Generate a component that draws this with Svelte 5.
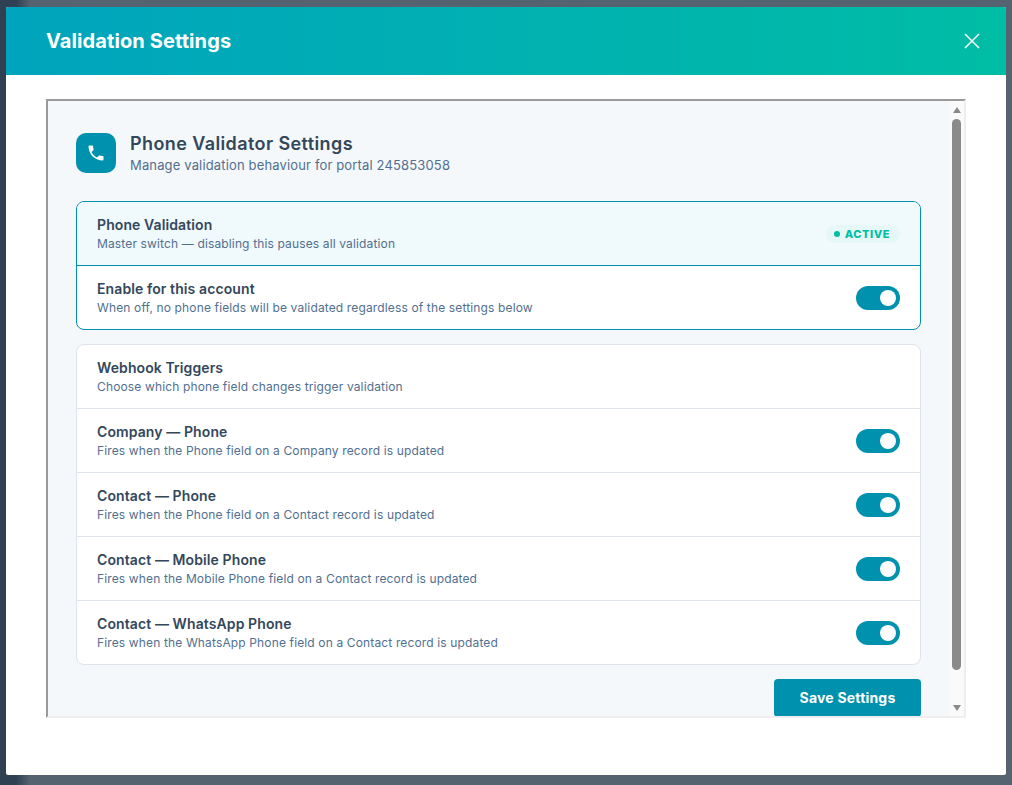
<script>
  const triggers = [
    { title: 'Company — Phone', desc: 'Fires when the Phone field on a Company record is updated' },
    { title: 'Contact — Phone', desc: 'Fires when the Phone field on a Contact record is updated' },
    { title: 'Contact — Mobile Phone', desc: 'Fires when the Mobile Phone field on a Contact record is updated' },
    { title: 'Contact — WhatsApp Phone', desc: 'Fires when the WhatsApp Phone field on a Contact record is updated' }
  ];
</script>

<div class="backdrop">
  <div class="modal">
    <header class="modal-head">
      <h1>Validation Settings</h1>
      <button class="close" aria-label="Close">
        <svg width="16" height="16" viewBox="0 0 16 16" fill="none" stroke="currentColor" stroke-width="1.5">
          <path d="M1 1l14 14M15 1L1 15" />
        </svg>
      </button>
    </header>
    <div class="modal-body">
      <div class="frame">
        <div class="page">
          <div class="title-row">
            <div class="logo">
              <svg width="20" height="20" viewBox="0 0 24 24" fill="#fff">
                <path d="M6.600 10.800c1.400 2.800 3.800 5.100 6.600 6.600l2.200-2.200c.3-.3.7-.4 1-.2 1.100.4 2.300.6 3.600.6.600 0 1 .4 1 1V20c0 .6-.4 1-1 1C10.600 21 3 13.400 3 4c0-.6.4-1 1-1h3.500c.6 0 1 .4 1 1 0 1.300.2 2.500.6 3.600.1.300 0 .7-.2 1z" />
              </svg>
            </div>
            <div>
              <h2>Phone Validator Settings</h2>
              <p class="sub">Manage validation behaviour for portal 245853058</p>
            </div>
          </div>

          <section class="card master">
            <div class="row head">
              <div>
                <div class="name">Phone Validation</div>
                <div class="desc">Master switch — disabling this pauses all validation</div>
              </div>
              <span class="badge"><i></i>ACTIVE</span>
            </div>
            <div class="row">
              <div>
                <div class="name">Enable for this account</div>
                <div class="desc">When off, no phone fields will be validated regardless of the settings below</div>
              </div>
              <span class="toggle"></span>
            </div>
          </section>

          <section class="card">
            <div class="row">
              <div>
                <div class="name">Webhook Triggers</div>
                <div class="desc">Choose which phone field changes trigger validation</div>
              </div>
            </div>
            {#each triggers as t}
              <div class="row">
                <div>
                  <div class="name">{t.title}</div>
                  <div class="desc">{t.desc}</div>
                </div>
                <span class="toggle"></span>
              </div>
            {/each}
          </section>

          <div class="actions">
            <button class="save">Save Settings</button>
          </div>
        </div>
        <div class="scrollbar">
          <span class="arrow up"></span>
          <span class="thumb"></span>
          <span class="arrow down"></span>
        </div>
      </div>
    </div>
  </div>
</div>

<style>
  :global(body) {
    margin: 0;
    font-family: "Inter", "Noto Sans", sans-serif;
  }

  .backdrop {
    height: 785px;
    width: 1012px;
    box-sizing: border-box;
    padding: 7px 6px 10px;
    overflow: hidden;
    background: linear-gradient(90deg, #2e4052 0, #2e4052 16px, #55626f 30px);
  }

  .modal {
    height: 768px;
    background: #fff;
    border-radius: 2px;
    display: flex;
    flex-direction: column;
  }

  .modal-head {
    height: 68px;
    flex: none;
    box-sizing: border-box;
    padding: 0 26px 0 40px;
    display: flex;
    align-items: center;
    justify-content: space-between;
    background: linear-gradient(90deg, #00a4bd, #00bda5);
    border-radius: 2px 2px 0 0;
    color: #fff;
  }

  h1 {
    margin: 0;
    font-size: 20px;
    font-weight: 700;
    letter-spacing: 0.1px;
  }

  .close {
    all: unset;
    display: flex;
    color: #fff;
  }

  .modal-body {
    padding: 24px 40px 0;
  }

  .frame {
    height: 619px;
    box-sizing: border-box;
    border: 2px solid;
    border-color: #9a9a9a #eeeeee #eeeeee #9a9a9a;
    display: flex;
    overflow: hidden;
    background: #f5f8fa;
    color: #33475b;
  }

  .page {
    flex: 1;
    min-width: 0;
    padding: 32px 28px 0;
  }

  .title-row {
    display: flex;
    align-items: center;
    gap: 14px;
    margin-bottom: 28px;
    height: 40px;
  }

  .logo {
    width: 40px;
    height: 40px;
    border-radius: 10px;
    background: #0091ae;
    display: flex;
    align-items: center;
    justify-content: center;
  }

  h2 {
    margin: 0;
    font-size: 18px;
    font-weight: 600;
    line-height: 22px;
    letter-spacing: 0.4px;
  }

  .sub {
    margin: 1px 0 0;
    font-size: 13px;
    line-height: 18px;
    color: #516f90;
    letter-spacing: 0.15px;
  }

  .card {
    background: #fff;
    border: 1px solid #dfe3eb;
    border-radius: 8px;
    overflow: hidden;
    margin-bottom: 14px;
  }

  .card.master {
    border-color: #0091ae;
  }

  .row {
    height: 63px;
    padding: 0 20px;
    display: flex;
    align-items: center;
    justify-content: space-between;
    border-top: 1px solid #dfe3eb;
  }

  .row:first-child {
    border-top: 0;
  }

  .master .row {
    border-top-color: #0091ae;
  }

  .row.head {
    background: #f0f9fb;
  }

  .name {
    font-size: 14px;
    font-weight: 600;
    line-height: 20px;
    letter-spacing: 0.1px;
  }

  .desc {
    font-size: 12px;
    line-height: 17px;
    color: #516f90;
    letter-spacing: 0.14px;
  }

  .badge {
    display: inline-flex;
    align-items: center;
    gap: 5px;
    height: 18px;
    padding: 0 10px 0 8px;
    border-radius: 9px;
    background: #e5f8f6;
    color: #00bda5;
    font-size: 11px;
    font-weight: 800;
    letter-spacing: 0.55px;
  }

  .badge i {
    width: 6px;
    height: 6px;
    border-radius: 50%;
    background: #00bda5;
  }

  .toggle {
    width: 44px;
    height: 24px;
    border-radius: 12px;
    background: #0091ae;
    position: relative;
    flex: none;
  }

  .toggle::after {
    content: "";
    position: absolute;
    top: 4px;
    right: 4px;
    width: 16px;
    height: 16px;
    border-radius: 50%;
    background: #fff;
  }

  .actions {
    display: flex;
    justify-content: flex-end;
  }

  .save {
    all: unset;
    box-sizing: border-box;
    width: 147px;
    height: 38px;
    padding-bottom: 2px;
    text-align: center;
    border-radius: 4px;
    background: #0091ae;
    color: #fff;
    font-size: 14px;
    font-weight: 700;
    letter-spacing: 0.2px;
  }

  .scrollbar {
    width: 15px;
    flex: none;
    background: #fafafa;
    display: flex;
    flex-direction: column;
    align-items: center;
    justify-content: space-between;
    padding: 6px 0 5px;
    box-sizing: border-box;
  }

  .thumb {
    width: 9px;
    height: 551px;
    margin-bottom: 29px;
    border-radius: 5px;
    background: #8a8a8a;
  }

  .arrow {
    width: 0;
    height: 0;
    border-left: 4.5px solid transparent;
    border-right: 4.5px solid transparent;
  }

  .arrow.up {
    border-bottom: 6px solid #8a8a8a;
  }

  .arrow.down {
    border-top: 6px solid #8a8a8a;
  }
</style>
